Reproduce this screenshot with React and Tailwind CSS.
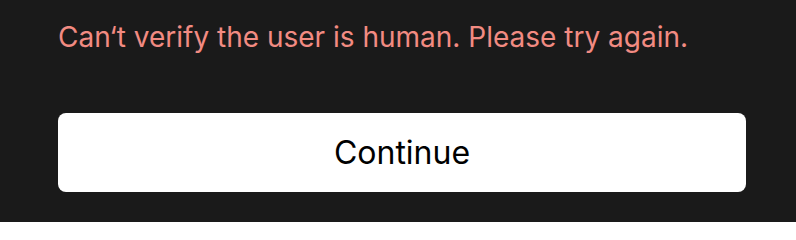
export default function App() {
  return (
    <div className="w-[796px] h-[222px] bg-[#1a1a1a] px-[58px] pt-[17px] flex flex-col" style={{ fontFamily: 'Inter, "Noto Sans", sans-serif' }}>
      <p className="text-[28px] leading-[40px] text-[#f28b82]">Can‘t verify the user is human. Please try again.</p>
      <button className="mt-[56px] w-[688px] h-[79px] rounded-[8px] bg-white text-black text-[32px] leading-[40px] font-normal">Continue</button>
    </div>
  );
}
